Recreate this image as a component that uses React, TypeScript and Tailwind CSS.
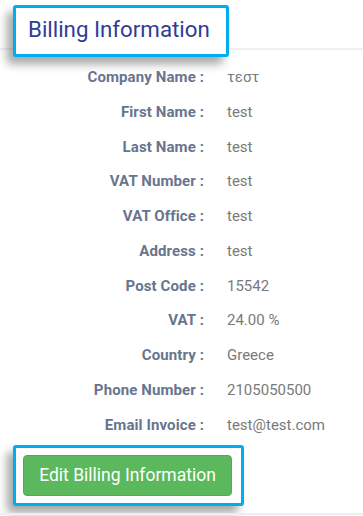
import React from 'react';

const rows: [string, string][] = [
  ['Company Name', 'τεστ'],
  ['First Name', 'test'],
  ['Last Name', 'test'],
  ['VAT Number', 'test'],
  ['VAT Office', 'test'],
  ['Address', 'test'],
  ['Post Code', '15542'],
  ['VAT', '24.00 %'],
  ['Country', 'Greece'],
  ['Phone Number', '2105050500'],
  ['Email Invoice', 'test@test.com'],
];

export default function App() {
  return (
    <div
      className="relative w-[363px] h-[516px] overflow-hidden bg-white"
      style={{ fontFamily: 'Roboto, "Noto Sans", sans-serif' }}
    >
      {/* Header */}
      <div className="relative h-[50px] border-b-2 border-[#eef0f5]">
        <div className="absolute left-[13px] top-[5px] w-[216px] h-[52px] rounded-[3px] border-[3px] border-[#00aeef] bg-white shadow-[-6px_7px_10px_rgba(0,0,0,0.35)] flex items-center pl-[12px]">
          <h2 className="text-[22.3px] text-[#2f3c96] leading-none pb-[3px]">Billing Information</h2>
        </div>
      </div>

      {/* Details */}
      <div className="pt-[10px]">
        {rows.map(([label, value]) => (
          <div key={label} className="flex items-center h-[34.75px]">
            <div className="w-[204px] text-right text-[15px] font-bold text-[#68758e] tracking-[0.1px]">
              {label} :
            </div>
            <div className="pl-[23px] text-[15px] text-[#7a7a7a]">{value}</div>
          </div>
        ))}
      </div>

      {/* Action */}
      <div className="absolute left-[13px] top-[445px] w-[231px] h-[61px] rounded-[3px] border-[3px] border-[#00aeef] bg-white shadow-[-6px_7px_10px_rgba(0,0,0,0.35)] flex items-center pl-[7px]">
        <button className="w-[209px] h-[41px] rounded-[4px] bg-[#5cb85c] border border-[#4cae4c] text-white text-[17.5px]">
          Edit Billing Information
        </button>
      </div>

      <div className="absolute left-0 right-0 top-[513px] h-[2px] bg-[#eceef2]" />
    </div>
  );
}
